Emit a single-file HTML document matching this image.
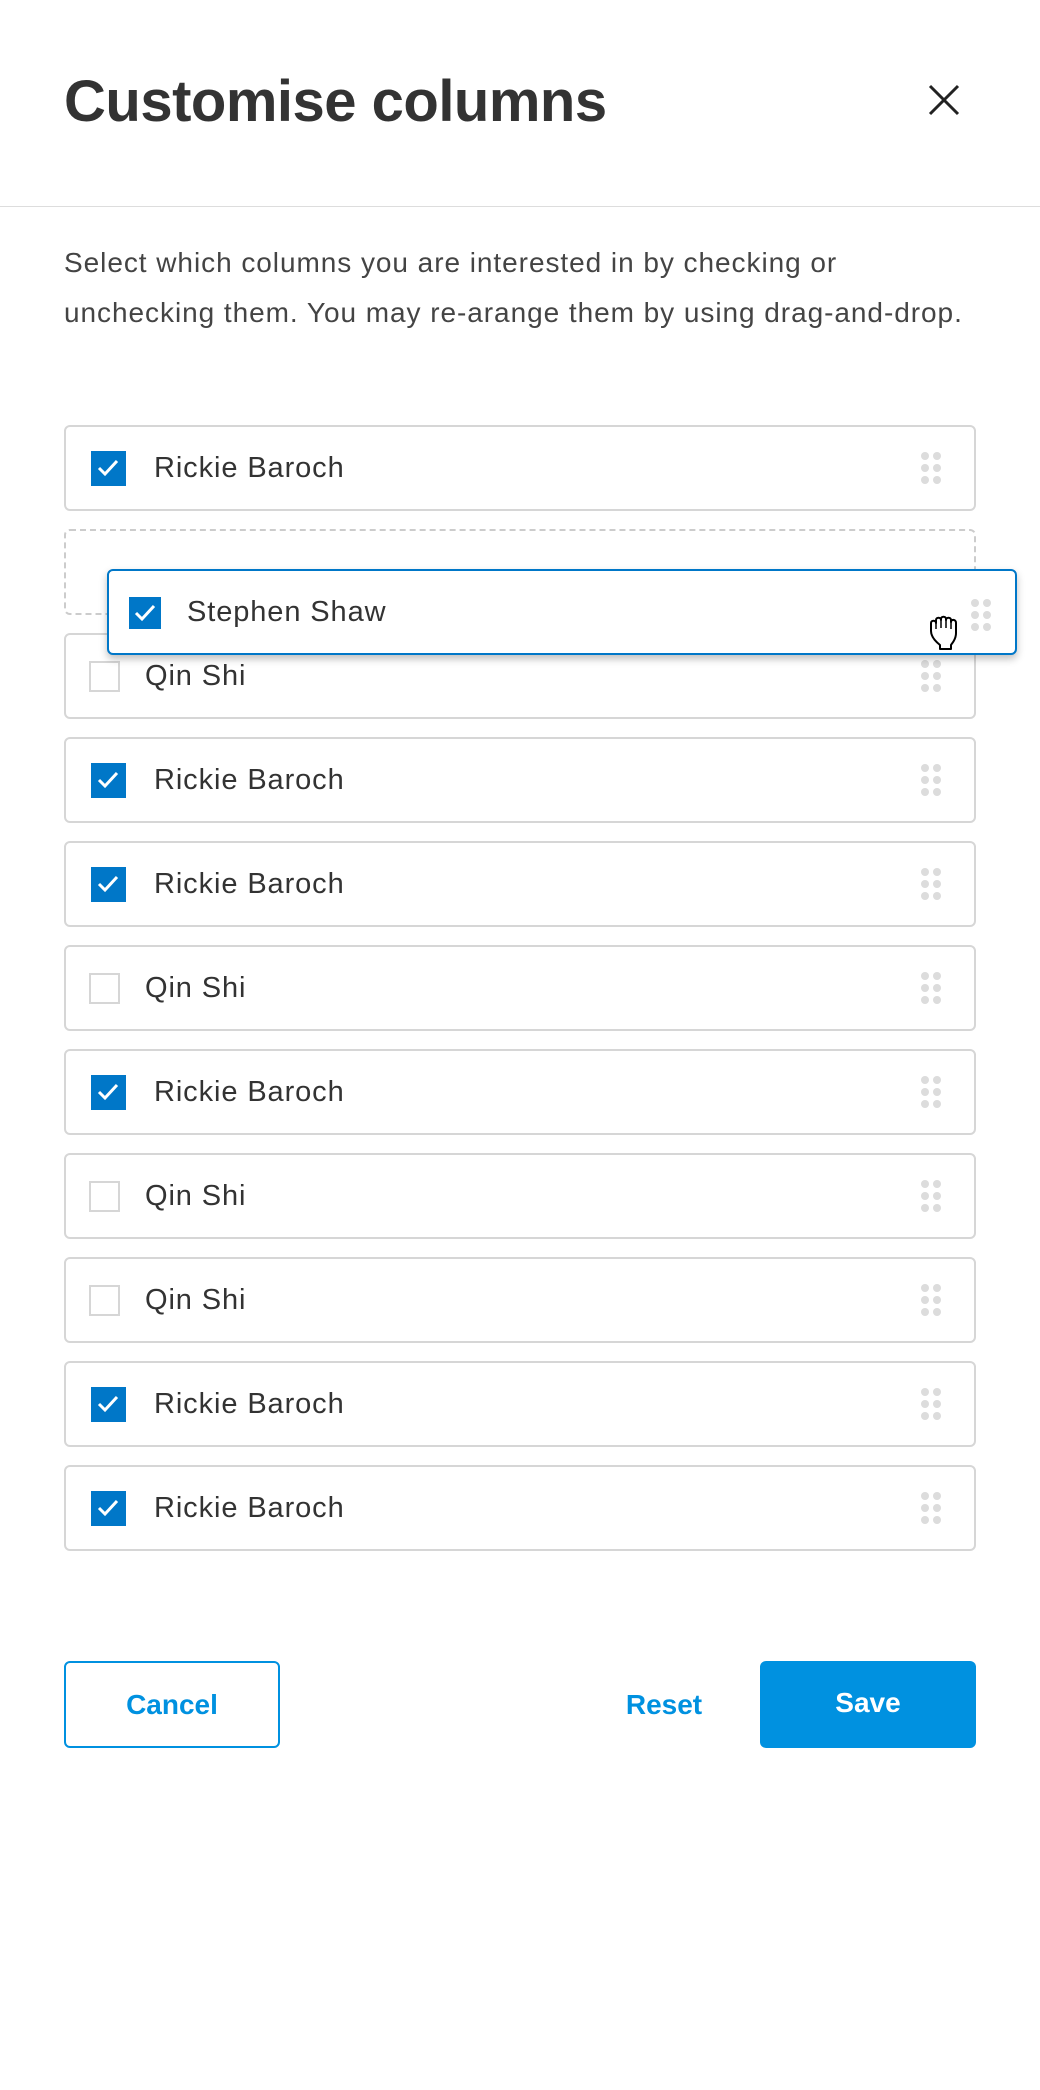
<!DOCTYPE html>
<html><head><meta charset="utf-8"><style>
*{box-sizing:border-box;margin:0;padding:0}
body{width:1040px;height:2090px;background:#fff;font-family:"Liberation Sans",sans-serif;color:#333;position:relative;overflow:hidden}
h1{position:absolute;left:64px;top:68px;font-size:58px;font-weight:bold;color:#333;letter-spacing:-0.5px}
.x{position:absolute;left:928px;top:84px}
.hr{position:absolute;left:0;top:206px;width:1040px;height:1px;background:#ddd}
.desc{position:absolute;left:64px;top:238px;font-size:28px;line-height:50px;color:#444;letter-spacing:0.95px}
.row{position:absolute;left:64px;width:912px;height:86px;border:2px solid #d6d6d6;border-radius:6px;background:#fff}
.cb{position:absolute;left:25px;top:24px;width:35px;height:35px;background:#0077c8}
.cb svg{position:absolute;left:6px;top:8px}
.ub{position:absolute;left:23px;top:26px;width:31px;height:31px;border:2px solid #d6d6d6;background:#fff}
.t{position:absolute;left:88px;top:0;line-height:82px;font-size:29px;color:#333;letter-spacing:0.9px}
.ub+.t{left:79px}
.dots{position:absolute;right:33px;top:25px;width:20px;height:32px}
.dots i{position:absolute;width:8px;height:8px;border-radius:50%;background:#dcdcdc}
.ph{position:absolute;left:64px;top:529px;width:912px;height:86px;border:2px dashed #ccc;border-radius:6px}
.drag{position:absolute;left:107px;top:569px;width:910px;height:86px;border:2px solid #0077c8;border-radius:6px;background:#fff;box-shadow:0 4px 8px rgba(0,0,0,.25)}
.btn{position:absolute;top:1661px;height:87px;width:216px;border-radius:6px;font-size:28px;font-weight:bold;text-align:center;line-height:83px}
</style></head><body>
<h1>Customise columns</h1>
<svg class="x" width="32" height="32" viewBox="0 0 32 32"><path d="M2 2L30 30M30 2L2 30" stroke="#222" stroke-width="3"/></svg>
<div class="hr"></div>
<div class="desc">Select which columns you are interested in by checking or<br>unchecking them. You may re-arange them by using drag-and-drop.</div>

<div class="row" style="top:425px"><div class="cb"><svg width="22" height="18" viewBox="0 0 22 18"><path d="M2 9l6 6L20 2" stroke="#fff" stroke-width="3" fill="none"/></svg></div><div class="t">Rickie Baroch</div><div class="dots"><i style="left:0;top:0"></i><i style="left:12px;top:0"></i><i style="left:0;top:12px"></i><i style="left:12px;top:12px"></i><i style="left:0;top:24px"></i><i style="left:12px;top:24px"></i></div></div>
<div class="ph"></div>
<div class="row" style="top:633px"><div class="ub"></div><div class="t">Qin Shi</div><div class="dots"><i style="left:0;top:0"></i><i style="left:12px;top:0"></i><i style="left:0;top:12px"></i><i style="left:12px;top:12px"></i><i style="left:0;top:24px"></i><i style="left:12px;top:24px"></i></div></div>
<div class="row" style="top:737px"><div class="cb"><svg width="22" height="18" viewBox="0 0 22 18"><path d="M2 9l6 6L20 2" stroke="#fff" stroke-width="3" fill="none"/></svg></div><div class="t">Rickie Baroch</div><div class="dots"><i style="left:0;top:0"></i><i style="left:12px;top:0"></i><i style="left:0;top:12px"></i><i style="left:12px;top:12px"></i><i style="left:0;top:24px"></i><i style="left:12px;top:24px"></i></div></div>
<div class="row" style="top:841px"><div class="cb"><svg width="22" height="18" viewBox="0 0 22 18"><path d="M2 9l6 6L20 2" stroke="#fff" stroke-width="3" fill="none"/></svg></div><div class="t">Rickie Baroch</div><div class="dots"><i style="left:0;top:0"></i><i style="left:12px;top:0"></i><i style="left:0;top:12px"></i><i style="left:12px;top:12px"></i><i style="left:0;top:24px"></i><i style="left:12px;top:24px"></i></div></div>
<div class="row" style="top:945px"><div class="ub"></div><div class="t">Qin Shi</div><div class="dots"><i style="left:0;top:0"></i><i style="left:12px;top:0"></i><i style="left:0;top:12px"></i><i style="left:12px;top:12px"></i><i style="left:0;top:24px"></i><i style="left:12px;top:24px"></i></div></div>
<div class="row" style="top:1049px"><div class="cb"><svg width="22" height="18" viewBox="0 0 22 18"><path d="M2 9l6 6L20 2" stroke="#fff" stroke-width="3" fill="none"/></svg></div><div class="t">Rickie Baroch</div><div class="dots"><i style="left:0;top:0"></i><i style="left:12px;top:0"></i><i style="left:0;top:12px"></i><i style="left:12px;top:12px"></i><i style="left:0;top:24px"></i><i style="left:12px;top:24px"></i></div></div>
<div class="row" style="top:1153px"><div class="ub"></div><div class="t">Qin Shi</div><div class="dots"><i style="left:0;top:0"></i><i style="left:12px;top:0"></i><i style="left:0;top:12px"></i><i style="left:12px;top:12px"></i><i style="left:0;top:24px"></i><i style="left:12px;top:24px"></i></div></div>
<div class="row" style="top:1257px"><div class="ub"></div><div class="t">Qin Shi</div><div class="dots"><i style="left:0;top:0"></i><i style="left:12px;top:0"></i><i style="left:0;top:12px"></i><i style="left:12px;top:12px"></i><i style="left:0;top:24px"></i><i style="left:12px;top:24px"></i></div></div>
<div class="row" style="top:1361px"><div class="cb"><svg width="22" height="18" viewBox="0 0 22 18"><path d="M2 9l6 6L20 2" stroke="#fff" stroke-width="3" fill="none"/></svg></div><div class="t">Rickie Baroch</div><div class="dots"><i style="left:0;top:0"></i><i style="left:12px;top:0"></i><i style="left:0;top:12px"></i><i style="left:12px;top:12px"></i><i style="left:0;top:24px"></i><i style="left:12px;top:24px"></i></div></div>
<div class="row" style="top:1465px"><div class="cb"><svg width="22" height="18" viewBox="0 0 22 18"><path d="M2 9l6 6L20 2" stroke="#fff" stroke-width="3" fill="none"/></svg></div><div class="t">Rickie Baroch</div><div class="dots"><i style="left:0;top:0"></i><i style="left:12px;top:0"></i><i style="left:0;top:12px"></i><i style="left:12px;top:12px"></i><i style="left:0;top:24px"></i><i style="left:12px;top:24px"></i></div></div>

<div class="drag"><div class="cb" style="left:20px;top:26px;width:32px;height:32px"><svg width="22" height="18" viewBox="0 0 22 18" style="left:5px;top:7px"><path d="M2 9l6 6L20 2" stroke="#fff" stroke-width="3" fill="none"/></svg></div><div class="t" style="left:78px">Stephen Shaw</div><div class="dots" style="right:24px;top:28px"><i style="left:0;top:0"></i><i style="left:12px;top:0"></i><i style="left:0;top:12px"></i><i style="left:12px;top:12px"></i><i style="left:0;top:24px"></i><i style="left:12px;top:24px"></i></div>
<svg style="position:absolute;left:816px;top:38px" width="44" height="44" viewBox="0 0 44 44"><path d="M6 14c0-3 5-3 5 0v-3c0-3 5-3 5 0v-1c0-3 5-3 5 0v1c0-3 5-3 5 0v2c0-3 5-3 5 1v10c0 7-4 10-5 12v4H15v-4C10 32 6 27 6 22z" fill="#fff" stroke="#000" stroke-width="2" stroke-linejoin="round"/><path d="M11 14v6M16 11v8M21 11v8M26 13v7" stroke="#000" stroke-width="1.5"/></svg></div>

<div class="btn" style="left:64px;border:2px solid #0091e0;color:#0091e0">Cancel</div>
<div class="btn" style="left:556px;width:216px;color:#0091e0;line-height:87px">Reset</div>
<div class="btn" style="left:760px;background:#0091e0;color:#fff;line-height:83px">Save</div>
</body></html>
